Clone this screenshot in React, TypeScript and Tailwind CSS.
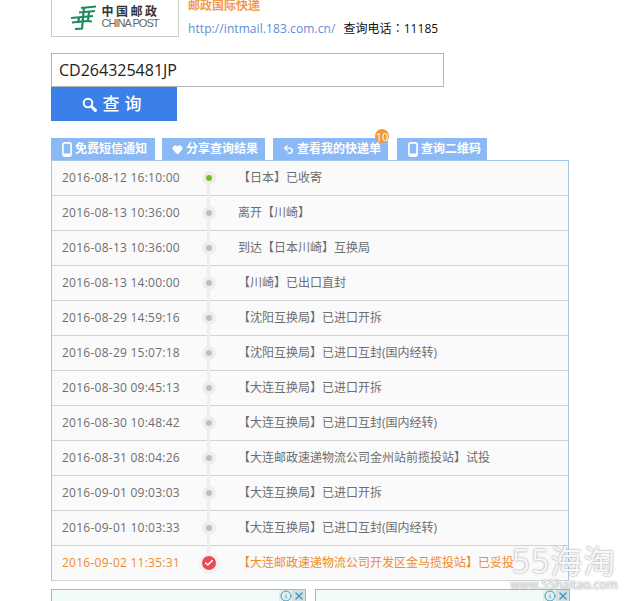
import React from 'react';
import { Heart, Undo2, X, Info, Check } from 'lucide-react';

const rows = [
  { time: '2016-08-12 16:10:00', text: '【日本】已收寄', state: 'first' },
  { time: '2016-08-13 10:36:00', text: '离开【川崎】' },
  { time: '2016-08-13 10:36:00', text: '到达【日本川崎】互换局' },
  { time: '2016-08-13 14:00:00', text: '【川崎】已出口直封' },
  { time: '2016-08-29 14:59:16', text: '【沈阳互换局】已进口开拆' },
  { time: '2016-08-29 15:07:18', text: '【沈阳互换局】已进口互封(国内经转)' },
  { time: '2016-08-30 09:45:13', text: '【大连互换局】已进口开拆' },
  { time: '2016-08-30 10:48:42', text: '【大连互换局】已进口互封(国内经转)' },
  { time: '2016-08-31 08:04:26', text: '【大连邮政速递物流公司金州站前揽投站】试投' },
  { time: '2016-09-01 09:03:03', text: '【大连互换局】已进口开拆' },
  { time: '2016-09-01 10:03:33', text: '【大连互换局】已进口互封(国内经转)' },
  { time: '2016-09-02 11:35:31', text: '【大连邮政速递物流公司开发区金马揽投站】已妥投', state: 'last' },
];

function PhoneIcon() {
  return (
    <svg width="10" height="15" viewBox="0 0 10 15" className="shrink-0">
      <rect x="0.9" y="0.9" width="8.2" height="13.2" rx="2" fill="none" stroke="#fff" strokeWidth="1.6" />
      <rect x="1" y="11.5" width="8" height="2.6" rx="1" fill="#fff" />
    </svg>
  );
}

function SearchIcon() {
  return (
    <svg width="15" height="15" viewBox="0 0 15 15" className="shrink-0">
      <circle cx="6" cy="6" r="4.3" fill="none" stroke="#fff" strokeWidth="2" />
      <path d="M9.5 9.5 L13.4 13.4" stroke="#fff" strokeWidth="3" strokeLinecap="round" />
    </svg>
  );
}

function Tab({ icon, label, width, badge }: { icon: React.ReactNode; label: string; width: string; badge?: boolean }) {
  return (
    <div className={`relative flex h-[22px] items-center bg-[#8ab9f5] pl-[8px] text-[12px] font-bold text-white ${width}`}>
      <span className="flex w-[15px] shrink-0 justify-center">{icon}</span>
      <span className="ml-[1px] whitespace-nowrap">{label}</span>
      {badge && (
        <span className="absolute right-[-1px] top-[-9px] flex h-[14px] w-[14px] items-center justify-center rounded-full bg-[#f39a2c] text-[11px] font-normal leading-none text-white">
          10
        </span>
      )}
    </div>
  );
}

function Dot({ state }: { state?: string }) {
  if (state === 'last') {
    return (
      <span className="relative flex h-[21px] w-[21px] items-center justify-center rounded-full bg-[#f3f3f3]">
        <span className="flex h-[14px] w-[14px] items-center justify-center rounded-full bg-[#ea4a55]">
          <Check size={10} strokeWidth={3.5} color="#fff" />
        </span>
      </span>
    );
  }
  return (
    <span className="relative flex h-[14px] w-[14px] items-center justify-center rounded-full bg-[#eeeeee]">
      <span className={`h-[6px] w-[6px] rounded-full ${state === 'first' ? 'bg-[#6cc21c]' : 'bg-[#bdbdbd]'}`} />
    </span>
  );
}

function AdBox() {
  return (
    <div className="relative h-[12px] w-[255px] border border-b-0 border-[#8fc7b8] bg-[#f0fbfa]">
      <div className="absolute right-0 top-0 flex h-[12px] items-center">
        <span className="flex h-[12px] w-[13px] items-center justify-center bg-[#e6eeee]">
          <Info size={12} color="#3f9cc6" />
        </span>
        <span className="flex h-[12px] w-[13px] items-center justify-center bg-[#d3dfe2]">
          <X size={12} strokeWidth={3} color="#3f9cc6" />
        </span>
      </div>
    </div>
  );
}

export default function App() {
  return (
    <div className="relative h-[601px] w-[632px] overflow-hidden bg-white pl-[51px] font-['Open_Sans','Noto_Sans_CJK_SC',sans-serif]">
      {/* Header */}
      <div className="flex h-[37px] items-start">
        <div className="flex h-[37px] w-[128px] items-center justify-center gap-[4px] border border-t-0 border-[#cccccc] pb-[1px]">
          <svg width="27" height="25" viewBox="0 0 27 25" className="shrink-0">
            <g fill="none" stroke="#1f8a5c" strokeWidth="2.2">
              <path d="M11 3 L26 1.5 M9 7.5 L25 6 M1 13 L23 11 M2 17.5 L17 16" />
              <path d="M14 2.5 L12 23.5 L5 24" />
              <path d="M19 6.5 L18 16 L22 16.5" />
              <path d="M9 12.5 L8 18" />
            </g>
          </svg>
          <div className="flex flex-col">
            <span className="text-[12px] font-bold leading-[12px] tracking-[2.5px] text-[#333]">中国邮政</span>
            <span className="font-['Liberation_Sans'] text-[11px] leading-[11px] tracking-[-0.95px] text-[#666]">CHINA POST</span>
          </div>
        </div>
        <div className="ml-[9px] flex flex-col">
          <span className="text-[12px] font-bold leading-[12px] text-[#f39a4c]">邮政国际快递</span>
          <div className="mt-[8px] flex items-center text-[12px] leading-[16px]">
            <span className="tracking-[0.08px] text-[#5b8fd6]">http://intmail.183.com.cn/</span>
            <span className="ml-[8px] tracking-[0.05px] text-[#111]">
              查询电话<span className="font-['Noto_Sans_CJK_TC']">：</span>11185
            </span>
          </div>
        </div>
      </div>

      {/* Search */}
      <div className="mt-[16px] flex h-[34px] w-[393px] items-center border border-[#b5b5b5] pl-[7px] text-[16px] text-[#222]">
        CD264325481JP
      </div>
      <div className="flex h-[34px] w-[126px] items-center justify-center gap-[6px] bg-[#3a80e8] text-[17px] font-medium text-white">
        <SearchIcon />
        <span className="tracking-[5px]">查询</span>
      </div>

      {/* Tabs */}
      <div className="mt-[17px] flex gap-[7px]">
        <Tab width="w-[104px]" icon={<PhoneIcon />} label="免费短信通知" />
        <Tab width="w-[103px]" icon={<Heart size={11} fill="#fff" color="#fff" />} label="分享查询结果" />
        <div className="ml-[1px] mr-[2px]">
          <Tab width="w-[115px]" icon={<Undo2 size={11} strokeWidth={3} color="#fff" />} label="查看我的快递单" badge />
        </div>
        <Tab width="w-[90px]" icon={<PhoneIcon />} label="查询二维码" />
      </div>

      {/* Timeline */}
      <div className="relative w-[518px] border-x border-t border-[#a5c8ea]">
        <div className="absolute bottom-[17px] left-[155px] top-[17px] w-[3px] bg-[#eeeeee]" />
        {rows.map((row, i) => {
          const color = row.state === 'last' ? 'text-[#ee8a2c]' : 'text-[#6e6e6e]';
          return (
            <div key={i} className="flex h-[35px] items-center border-b border-[#cfd4d8] bg-[#fafafa] text-[12px]">
              <span className={`ml-[10px] w-[118px] whitespace-nowrap tracking-[0.25px] ${color}`}>{row.time}</span>
              <span className="flex w-[58px] justify-center">
                <Dot state={row.state} />
              </span>
              <span className={`whitespace-nowrap ${color}`}>{row.text}</span>
            </div>
          );
        })}
      </div>

      {/* Ads */}
      <div className="mt-[8px] flex gap-[9px]">
        <AdBox />
        <AdBox />
      </div>

      {/* Watermark */}
      <div className="pointer-events-none absolute bottom-[10px] left-[508px] flex w-[112px] flex-col items-center text-[#f7f7f7] [text-shadow:0_0_2px_#888]">
        <span className="whitespace-nowrap text-[32px] leading-[36px] tracking-[1px]">55海淘</span>
        <span className="whitespace-nowrap text-[12px] leading-[12px] text-[#e8e8e8]">www.55haitao.com</span>
      </div>
    </div>
  );
}
